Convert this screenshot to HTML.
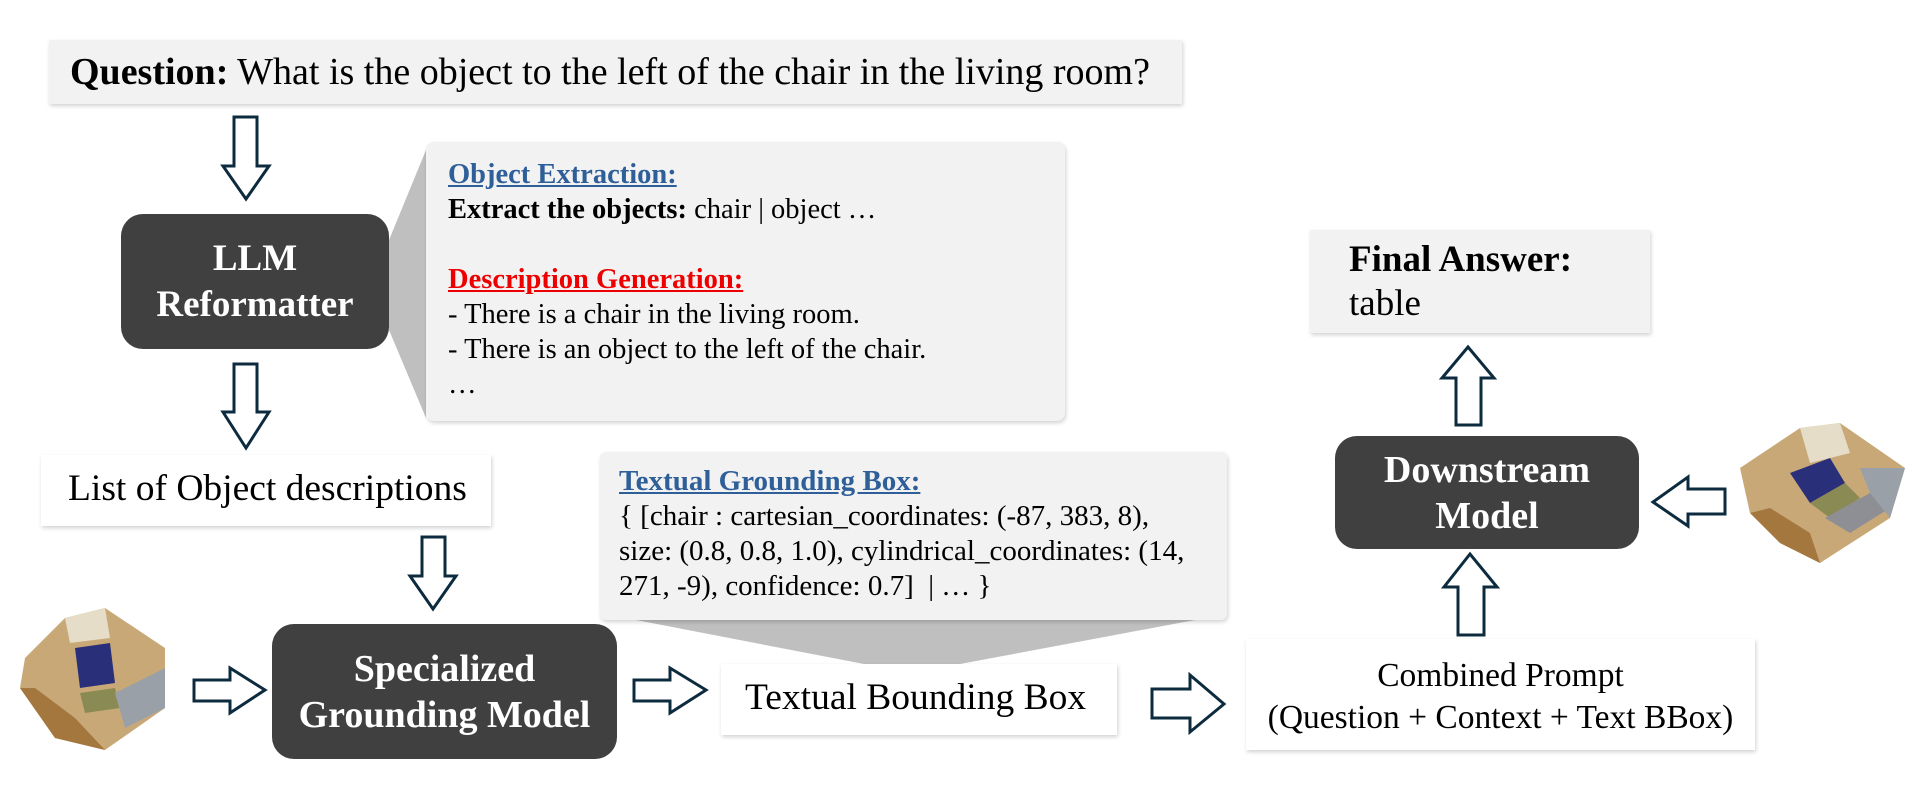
<!DOCTYPE html>
<html><head><meta charset="utf-8"><style>
*{margin:0;padding:0;box-sizing:border-box}
body{width:1921px;height:799px;background:#fff;position:relative;overflow:hidden;font-family:"Liberation Serif",serif;color:#000}
.b{position:absolute}
.g{background:#f2f2f2;box-shadow:1px 2px 4px rgba(0,0,0,.18)}
.w{background:#fff;box-shadow:1px 2px 4px rgba(0,0,0,.18)}
.d{background:#404040;border-radius:22px;color:#fff;font-weight:bold;text-align:center;display:flex;flex-direction:column;justify-content:center;font-size:37px;line-height:46px}
.t{position:absolute;white-space:nowrap}
</style></head><body>
<svg class="b" style="left:0;top:0" width="1921" height="799">
<polygon points="389,240 426,150 426,418 389,330" fill="#bfbfbf"/>
<polygon points="636,620 1195,620 960,664 864,664" fill="#bfbfbf"/>
<g fill="#fff" stroke="#0d2b3e" stroke-width="3" stroke-linejoin="miter">
<polygon points="234,117 257,117 257,166 269,166 246,199 223,166 234,166"/>
<polygon points="234,364 257,364 257,412 269,412 246,448 223,412 234,412"/>
<polygon points="422,537 445,537 445,576 456,576 433,609 410,576 422,576"/>
<polygon points="194,680 230,680 230,668 265,690 230,713 230,701 194,701"/>
<polygon points="634,680 670,680 670,668 706,690 670,713 670,701 634,701"/>
<polygon points="1152,689 1190,689 1190,675 1224,704 1190,732 1190,718 1152,718"/>
<polygon points="1458,635 1484,635 1484,587 1497,587 1470,554 1444,587 1458,587"/>
<polygon points="1456,425 1481,425 1481,378 1494,378 1468,347 1442,378 1456,378"/>
<polygon points="1725,489 1688,489 1688,477 1653,502 1688,526 1688,514 1725,514"/>
</g>
</svg>
<div class="b g" style="left:49px;top:40px;width:1133px;height:64px"></div>
<div class="t" style="left:70px;top:50px;font-size:38px"><b>Question:</b> What is the object to the left of the chair in the living room?</div>
<div class="b d" style="left:121px;top:214px;width:268px;height:135px"><div>LLM</div><div>Reformatter</div></div>
<div class="b g" style="left:426px;top:142px;width:639px;height:279px;border-radius:8px"></div>
<div class="t" style="left:448px;top:157px;font-size:28.5px;line-height:35px">
<div style="color:#2e5f99;font-weight:bold;text-decoration:underline">Object Extraction:</div>
<div><b>Extract the objects:</b> chair | object …</div>
<div>&nbsp;</div>
<div style="color:#e00;font-weight:bold;text-decoration:underline">Description Generation:</div>
<div>- There is a chair in the living room.</div>
<div>- There is an object to the left of the chair.</div>
<div>…</div></div>
<div class="b w" style="left:41px;top:455px;width:450px;height:71px"></div>
<div class="t" style="left:68px;top:467px;font-size:37.5px">List of Object descriptions</div>
<div class="b d" style="left:272px;top:624px;width:345px;height:135px;font-size:38px"><div>Specialized</div><div>Grounding Model</div></div>
<div class="b g" style="left:600px;top:452px;width:627px;height:168px;border-radius:6px"></div>
<div class="t" style="left:619px;top:464px;font-size:29px;line-height:35px">
<div style="color:#2e5f99;font-weight:bold;text-decoration:underline">Textual Grounding Box:</div>
<div>{ [chair : cartesian_coordinates: (-87, 383, 8),</div>
<div>size: (0.8, 0.8, 1.0), cylindrical_coordinates: (14,</div>
<div>271, -9), confidence: 0.7]&nbsp; | … }</div></div>
<div class="b w" style="left:721px;top:664px;width:396px;height:71px"></div>
<div class="t" style="left:745px;top:676px;font-size:37.5px">Textual Bounding Box</div>
<div class="b w" style="left:1246px;top:639px;width:509px;height:111px"></div>
<div class="t" style="left:1246px;top:655px;width:509px;text-align:center;font-size:33.5px;line-height:42px">Combined Prompt<br>(Question + Context + Text BBox)</div>
<div class="b g" style="left:1310px;top:230px;width:340px;height:103px"></div>
<div class="t" style="left:1349px;top:238px;font-size:37px;line-height:44px"><b>Final Answer:</b><br>table</div>
<div class="b d" style="left:1335px;top:436px;width:304px;height:113px;font-size:38px"><div>Downstream</div><div>Model</div></div>
<svg class="b" style="left:1740px;top:423px" width="170" height="140" viewBox="0 0 170 140">
<polygon points="0,45 60,5 100,0 165,45 150,95 80,140 40,120 10,90" fill="#c9a877"/>
<polygon points="50,50 90,35 105,60 70,80" fill="#2a2f7a"/>
<polygon points="70,80 105,60 120,75 90,95" fill="#8a8a55"/>
<polygon points="85,95 130,70 150,85 110,110" fill="#8d8f95"/>
<polygon points="120,45 165,45 150,95 130,70" fill="#9aa0a8"/>
<polygon points="60,5 100,0 110,30 70,40" fill="#e5ddc8"/>
<polygon points="10,90 40,120 80,140 70,110 30,85" fill="#a4773f"/>
</svg>
<svg class="b" style="left:15px;top:608px" width="170" height="142" viewBox="0 0 170 142">
<polygon points="10,50 50,10 90,0 150,40 150,100 90,142 40,130 5,80" fill="#c9a877"/>
<polygon points="60,40 95,35 100,75 65,80" fill="#2a2f7a"/>
<polygon points="65,85 100,80 105,100 70,105" fill="#8a8a55"/>
<polygon points="100,85 150,60 150,100 110,120" fill="#9aa0a8"/>
<polygon points="50,10 90,0 95,30 55,35" fill="#e5ddc8"/>
<polygon points="5,80 40,130 90,142 60,110 20,80" fill="#a4773f"/>
</svg>
</body></html>
